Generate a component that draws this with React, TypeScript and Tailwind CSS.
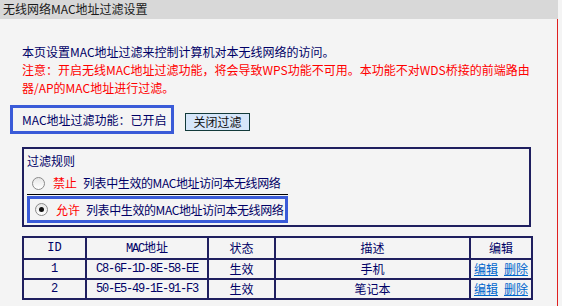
const rows = [
  { id: '1', mac: 'C8-6F-1D-8E-58-EE', state: '生效', desc: '手机' },
  { id: '2', mac: '50-E5-49-1E-91-F3', state: '生效', desc: '笔记本' },
];

const font = "font-['Noto_Sans_CJK_SC',sans-serif]";

const Radio = ({ checked }: { checked?: boolean }) => (
  <span className="w-[13px] h-[13px] rounded-full border border-[#8a8a8a] bg-gradient-to-b from-[#e6e6e6] to-white flex items-center justify-center shrink-0">
    {checked && <span className="w-[5px] h-[5px] rounded-full bg-[#111]" />}
  </span>
);

const RuleRow = ({ checked, label }: { checked?: boolean; label: string }) => (
  <div className="flex items-center h-[18px] whitespace-nowrap">
    <div className="w-[20px] flex justify-center ml-[1px]">
      <Radio checked={checked} />
    </div>
    <span className="ml-[5px] text-[#ff0000]">{label}</span>
    <span className="ml-[6px] tracking-[-0.4px]">列表中生效的MAC地址访问本无线网络</span>
  </div>
);

const App = () => {
  return (
    <div className={`w-[562px] h-[306px] bg-[#f4f4f4] overflow-hidden text-[12px] leading-[18px] text-[#000066] ${font}`}>
      {/* Title bar */}
      <div className="w-[558px] h-[19px] bg-[#d8d8d8] pl-[3px] text-[#1a1a1a] leading-[17px]">
        无线网络MAC地址过滤设置
      </div>

      <div className="w-[558px] h-[287px] border-r border-[#e02020]">
        <div className="pl-[22px] pt-[24px] whitespace-nowrap">
          <p>本页设置MAC地址过滤来控制计算机对本无线网络的访问。</p>
          <p className="text-[#ff0000]">
            注意：开启无线MAC地址过滤功能，将会导致WPS功能不可用。本功能不对WDS桥接的前端路由
            <br />
            器/AP的MAC地址进行过滤。
          </p>
        </div>

        {/* Status */}
        <div className="flex items-start mt-[8px] pl-[10px]">
          <div className="w-[164px] h-[29px] border-[3px] border-[#3a5bd8] pl-[9px] flex items-center whitespace-nowrap">
            MAC地址过滤功能：已开启
          </div>
          <button className="ml-[11px] mt-[8px] w-[65px] h-[18px] border border-[#123a3a] bg-[#d6e6fa] text-[#111] leading-[16px]">
            关闭过滤
          </button>
        </div>

        {/* Rules */}
        <div className="ml-[22px] mt-[13px] w-[509px] h-[80px] border-2 border-[#1f1f5f] pt-[3px]">
          <div className="pl-[3px]">过滤规则</div>
          <div className="pl-[3px] mt-[4px]">
            <RuleRow label="禁止" />
          </div>
          <div className="ml-[3px] mt-[2px] w-[261px] border-t border-black">
            <div className="h-[27px] mt-[1px] border-[3px] border-[#3a5bd8] flex items-center">
              <RuleRow checked label="允许" />
            </div>
          </div>
        </div>

        {/* List */}
        <table className="ml-[22px] mt-[9px] w-[509px] table-fixed border-collapse text-center">
          <colgroup>
            <col className="w-[63px]" />
            <col className="w-[122px]" />
            <col className="w-[67px]" />
            <col className="w-[195px]" />
            <col className="w-[62px]" />
          </colgroup>
          <thead>
            <tr className="h-[20px]">
              <th className="border-2 border-[#1f1f5f] font-normal font-['Liberation_Mono',monospace]">ID</th>
              <th className="border-2 border-[#1f1f5f] font-normal">
                <span className="font-['Liberation_Mono',monospace] tracking-[-1.2px]">MAC</span>地址
              </th>
              <th className="border-2 border-[#1f1f5f] font-normal">状态</th>
              <th className="border-2 border-[#1f1f5f] font-normal">描述</th>
              <th className="border-2 border-[#1f1f5f] font-normal">编辑</th>
            </tr>
          </thead>
          <tbody>
            {rows.map(r => (
              <tr key={r.id} className="h-[20px]">
                <td className="border-2 border-[#1f1f5f] p-0 font-['Liberation_Mono',monospace]">{r.id}</td>
                <td className="border-2 border-[#1f1f5f] p-0 font-['Liberation_Mono',monospace] tracking-[-1.2px]">{r.mac}</td>
                <td className="border-2 border-[#1f1f5f] p-0">{r.state}</td>
                <td className="border-2 border-[#1f1f5f] p-0">{r.desc}</td>
                <td className="border-2 border-[#1f1f5f] p-0 text-[#0066cc] whitespace-nowrap">
                  <a href="#" className="underline">编辑</a>
                  <a href="#" className="underline ml-[6px]">删除</a>
                </td>
              </tr>
            ))}
          </tbody>
        </table>
      </div>
    </div>
  );
};

export default App;
